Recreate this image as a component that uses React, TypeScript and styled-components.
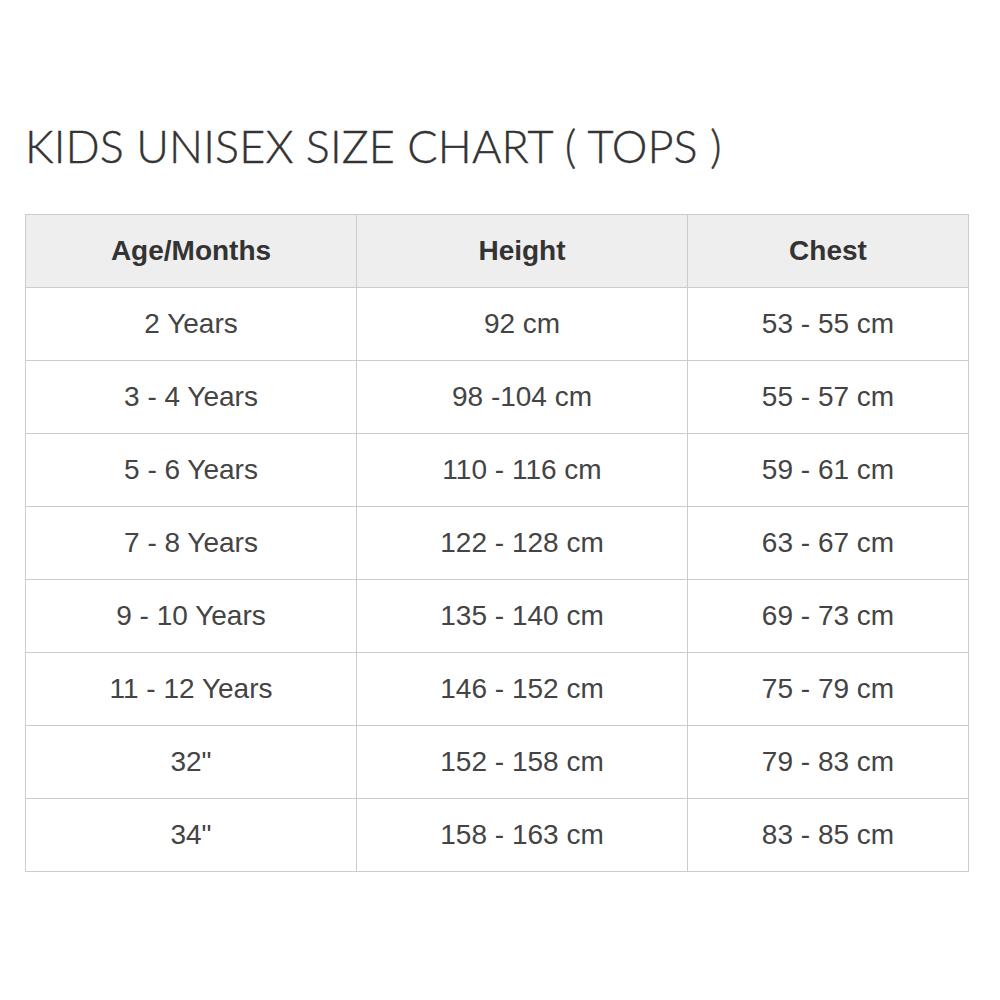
import React from "react";
import styled, { createGlobalStyle } from "styled-components";

const Global = createGlobalStyle`
  html, body { margin: 0; padding: 0; background: #fff; }
`;

const Page = styled.div`
  width: 1000px;
  height: 1000px;
  box-sizing: border-box;
  padding: 118px 0 0 25px;
`;

const Title = styled.h1`
  margin: 0 0 40px 0;
  font-family: Lato, "Open Sans", sans-serif;
  font-weight: 300;
  font-size: 45px;
  line-height: 56px;
  color: #333;
  letter-spacing: 0.1px;
  -webkit-text-stroke: 0.4px #333;
`;

const Table = styled.table`
  border-collapse: collapse;
  table-layout: fixed;
  width: 943px;
  font-family: "Liberation Sans", Arial, sans-serif;
  font-size: 28px;
  color: #444;
`;

const Col = styled.col<{ $w: number }>`
  width: ${(p) => p.$w}px;
`;

const Th = styled.th`
  height: 72px;
  padding: 0;
  background: #eeeeee;
  border: 1.5px solid #cccccc;
  font-weight: 700;
  color: #333;
  text-align: center;
`;

const Td = styled.td`
  height: 72px;
  padding: 0;
  border: 1.5px solid #cccccc;
  text-align: center;
  font-weight: 400;
`;

const rows: [string, string, string][] = [
  ["2 Years", "92 cm", "53 - 55 cm"],
  ["3 - 4 Years", "98 -104 cm", "55 - 57 cm"],
  ["5 - 6 Years", "110 - 116 cm", "59 - 61 cm"],
  ["7 - 8 Years", "122 - 128 cm", "63 - 67 cm"],
  ["9 - 10 Years", "135 - 140 cm", "69 - 73 cm"],
  ["11 - 12 Years", "146 - 152 cm", "75 - 79 cm"],
  ['32"', "152 - 158 cm", "79 - 83 cm"],
  ['34"', "158 - 163 cm", "83 - 85 cm"],
];

export default function App() {
  return (
    <>
      <Global />
      <Page>
        <Title>KIDS UNISEX SIZE CHART ( TOPS )</Title>
        <Table>
          <colgroup>
            <Col $w={331} />
            <Col $w={331} />
            <Col $w={281} />
          </colgroup>
          <thead>
            <tr>
              <Th>Age/Months</Th>
              <Th>Height</Th>
              <Th>Chest</Th>
            </tr>
          </thead>
          <tbody>
            {rows.map((r) => (
              <tr key={r[0]}>
                <Td>{r[0]}</Td>
                <Td>{r[1]}</Td>
                <Td>{r[2]}</Td>
              </tr>
            ))}
          </tbody>
        </Table>
      </Page>
    </>
  );
}
